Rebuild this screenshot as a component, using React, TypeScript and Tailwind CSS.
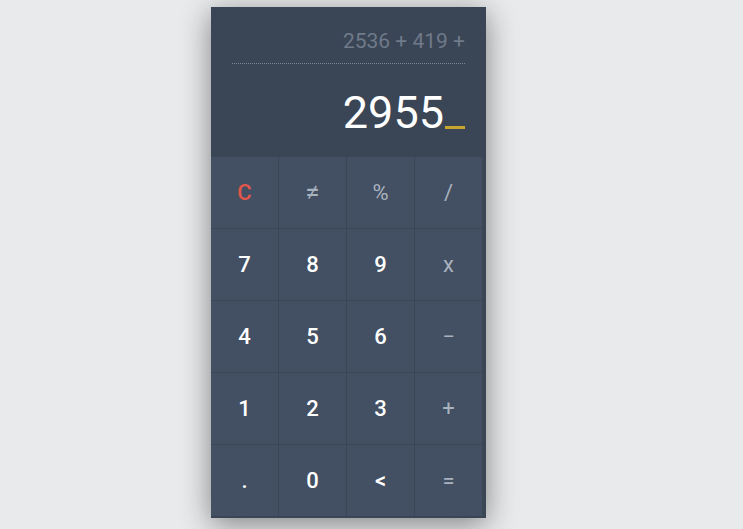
const keys = [
  { label: "C", tone: "clear" },
  { label: "≠", tone: "op" },
  { label: "%", tone: "op" },
  { label: "/", tone: "op" },
  { label: "7", tone: "num" },
  { label: "8", tone: "num" },
  { label: "9", tone: "num" },
  { label: "x", tone: "op" },
  { label: "4", tone: "num" },
  { label: "5", tone: "num" },
  { label: "6", tone: "num" },
  { label: "−", tone: "op" },
  { label: "1", tone: "num" },
  { label: "2", tone: "num" },
  { label: "3", tone: "num" },
  { label: "+", tone: "op" },
  { label: ".", tone: "num" },
  { label: "0", tone: "num" },
  { label: "<", tone: "num" },
  { label: "=", tone: "op" },
];

const toneClass: Record<string, string> = {
  clear: "text-[#e0574b] font-medium",
  op: "text-[#a9b2bf]",
  num: "text-white font-medium",
};

export default function App() {
  return (
    <main className="min-h-screen w-full bg-[#e9eaec] font-['Roboto',sans-serif]">
      <div className="pl-[211px] pt-[7px]">
        <div className="w-[275px] border-b-2 border-[#3a4555] bg-[#3a4555] shadow-[0_6px_28px_rgba(0,0,0,0.45)]">
          <div className="h-[150px] px-[21px] pt-[22px]">
            <div className="border-b border-dotted border-[#7a8595] pb-[10px] text-right text-[21px] leading-[24px] text-[#6f7a8a]">
              2536 + 419 +
            </div>
            <div className="mt-[23px] flex items-end justify-end text-[45px] leading-[52px] text-white">
              <span>2955</span>
              <span className="mb-[10px] ml-[1px] h-[3px] w-[20px] bg-[#c6a62c]" />
            </div>
          </div>
          <div className="grid grid-cols-[repeat(4,67px)] gap-px pr-[4px]">
            {keys.map((k) => (
              <div
                key={k.label}
                className={`flex h-[71px] items-center justify-center bg-[#434f62] ${
                  k.label === "≠" ? "text-[26px]" : "text-[22px]"
                } ${toneClass[k.tone]}`}
              >
                {k.label}
              </div>
            ))}
          </div>
        </div>
      </div>
    </main>
  );
}
